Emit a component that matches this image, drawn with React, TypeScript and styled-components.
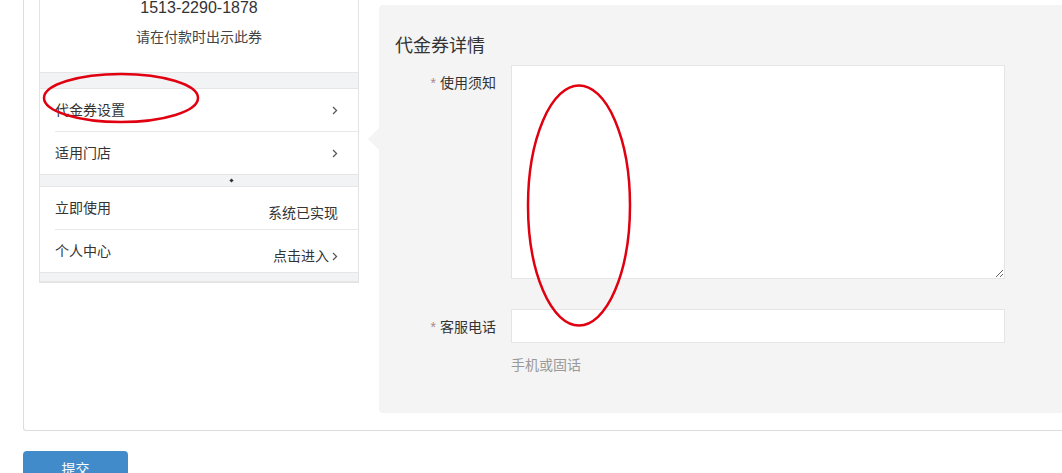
import React from "react";
import styled, { createGlobalStyle } from "styled-components";

const GlobalStyle = createGlobalStyle`
  html, body {
    margin: 0;
    padding: 0;
    background: #fff;
    overflow: hidden;
  }
  body {
    font-family: "Liberation Sans", "Noto Sans CJK SC", sans-serif;
    color: #333;
    font-size: 14px;
  }
  * {
    box-sizing: border-box;
  }
`;

function Chevron() {
  return (
    <svg width="6" height="9" viewBox="0 0 6 9" style={{ marginLeft: 3 }}>
      <path d="M1 1 L4.6 4.5 L1 8" fill="none" stroke="#555" strokeWidth="1.2" />
    </svg>
  );
}

function App() {
  return (
    <>
      <GlobalStyle />
      <Page>
        <Card>
          <Phone>
            <CouponTop>
              <CouponNumber>1513-2290-1878</CouponNumber>
              <CouponNote>请在付款时出示此券</CouponNote>
            </CouponTop>
            <Strip $height={15} />
            <Row>
              <span>代金券设置</span>
              <Chevron />
            </Row>
            <Row>
              <span>适用门店</span>
              <Chevron />
            </Row>
            <Strip $height={11}>
              <Dot />
            </Strip>
            <Row>
              <span>立即使用</span>
              <Value>系统已实现</Value>
            </Row>
            <Row>
              <span>个人中心</span>
              <Value>
                点击进入
                <Chevron />
              </Value>
            </Row>
            <Strip $height={8} />
          </Phone>

          <Panel>
            <PanelTitle>代金券详情</PanelTitle>
            <FormRow>
              <Label>
                <Star>*</Star>使用须知
              </Label>
              <TextArea />
            </FormRow>
            <FormRow $gap={30}>
              <Label>
                <Star>*</Star>客服电话
              </Label>
              <Input type="text" />
            </FormRow>
            <Help>手机或固话</Help>
          </Panel>
        </Card>
        <SubmitButton>提交</SubmitButton>
      </Page>

      <Marks width="1062" height="473" viewBox="0 0 1062 473">
        <ellipse cx="121" cy="98" rx="77" ry="24" />
        <ellipse cx="579" cy="205.5" rx="51" ry="120" />
      </Marks>
    </>
  );
}

const Page = styled.div`
  width: 1140px;
  margin-top: -20px;
  padding-left: 23px;
`;

const Card = styled.div`
  display: flex;
  align-items: flex-start;
  gap: 20px;
  padding: 25px 0 17px 15px;
  border-left: 1px solid #ddd;
  border-bottom: 1px solid #ddd;
  border-bottom-left-radius: 3px;
`;

const Phone = styled.div`
  width: 320px;
  margin-top: -29px;
  border: 1px solid #e3e3e3;
  border-top: none;
  background: #fff;
`;

const CouponTop = styled.div`
  padding: 21px 0 25px;
  text-align: center;
`;

const CouponNumber = styled.div`
  font-size: 16px;
  line-height: 22px;
  color: #333;
`;

const CouponNote = styled.div`
  margin-top: 8px;
  font-size: 14px;
  line-height: 20px;
  color: #444;
`;

const Strip = styled.div<{ $height: number }>`
  position: relative;
  height: ${(p) => p.$height + 2}px;
  background: #f2f3f5;
  border-top: 1px solid #e6e6e6;
  border-bottom: 1px solid #e6e6e6;
`;

const Dot = styled.span`
  position: absolute;
  left: 190px;
  top: 4px;
  width: 3px;
  height: 3px;
  background: #333;
  transform: rotate(45deg);
`;

const Row = styled.div`
  display: flex;
  justify-content: space-between;
  align-items: center;
  height: 42px;
  margin-left: 15px;
  padding-right: 20px;
  font-size: 14px;
  line-height: 20px;
  color: #333;

  & + & {
    height: 43px;
    border-top: 1px solid #e8e8e8;
  }
`;

const Value = styled.span`
  display: flex;
  align-items: center;
  padding-top: 10px;
  font-size: 14px;
  color: #333;
`;

const Panel = styled.div`
  position: relative;
  flex: 1;
  padding: 29px 16px 38px;
  background: #f4f4f4;
  border-radius: 4px;

  &::before {
    content: "";
    position: absolute;
    left: -11px;
    top: 123px;
    border-top: 11px solid transparent;
    border-bottom: 11px solid transparent;
    border-right: 11px solid #f4f4f4;
  }
`;

const PanelTitle = styled.div`
  font-size: 18px;
  line-height: 24px;
  color: #333;
  margin-bottom: 7px;
`;

const FormRow = styled.div<{ $gap?: number }>`
  display: flex;
  gap: 15px;
  margin-top: ${(p) => p.$gap ?? 0}px;
`;

const Label = styled.label`
  width: 101px;
  padding-top: 8px;
  text-align: right;
  font-size: 14px;
  line-height: 20px;
  color: #333;
`;

const Star = styled.span`
  color: #a88;
  margin-right: 4px;
`;

const TextArea = styled.textarea`
  display: block;
  width: 494px;
  height: 214px;
  border: 1px solid #e5e5e5;
  background: #fff;
  outline: none;
`;

const Input = styled.input`
  display: block;
  width: 494px;
  height: 34px;
  border: 1px solid #e5e5e5;
  background: #fff;
  outline: none;
`;

const Help = styled.div`
  margin: 12px 0 0 116px;
  font-size: 14px;
  line-height: 20px;
  color: #999;
`;

const SubmitButton = styled.button`
  display: block;
  width: 105px;
  height: 34px;
  margin-top: 20px;
  border: none;
  border-radius: 4px;
  background: #428bca;
  color: #fff;
  font-family: "Liberation Sans", "Noto Sans CJK SC", sans-serif;
  font-size: 14px;
`;

const Marks = styled.svg`
  position: absolute;
  top: 0;
  left: 0;
  pointer-events: none;

  & ellipse {
    fill: none;
    stroke: #e00010;
    stroke-width: 2.5;
  }
`;

export default App;
